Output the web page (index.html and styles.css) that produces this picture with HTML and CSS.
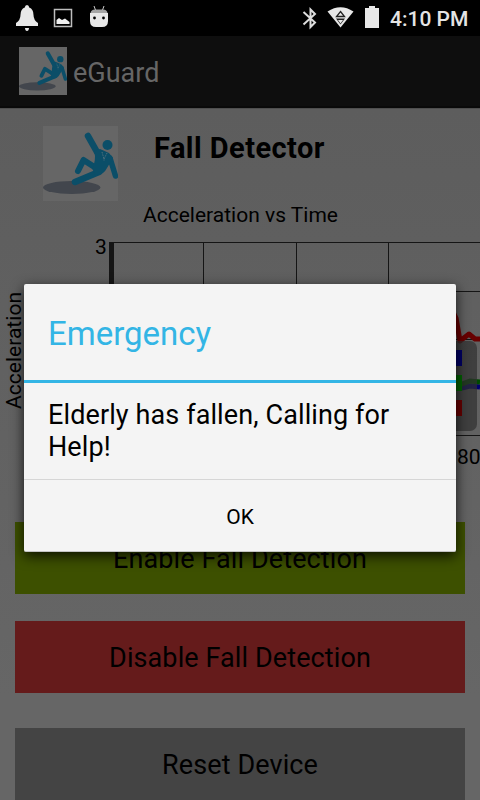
FILE: index.html
```html
<!DOCTYPE html>
<html lang="en">
<head>
<meta charset="utf-8">
<title>eGuard</title>
<link rel="stylesheet" href="styles.css">
</head>
<body>
<svg class="defs" width="0" height="0" aria-hidden="true">
  <symbol id="falling" viewBox="0 0 75 75">
    <rect width="75" height="75" fill="#666"/>
    <ellipse cx="28.700" cy="61.500" rx="28.700" ry="6.500" fill="#42464d"/>
    <circle cx="64.500" cy="19" r="5" fill="#0b4e68"/>
    <g fill="none" stroke="#0b4e68" stroke-linecap="round" stroke-linejoin="round">
      <path d="M45 10L54 26" stroke-width="6.500"/>
      <path d="M67 32L72.500 50" stroke-width="5.500"/>
      <path d="M53 42L40.500 34L35 45" stroke-width="6"/>
      <path d="M32 56L56 46" stroke-width="6.500"/>
    </g>
    <path d="M51 25L57 23L66 27L70 32L64 42Q60 50 52 49L49 42Q52 38 52 30Z" fill="#0b4e68"/>
    <path d="M59 26L61 33L64 27M61 32V35" fill="none" stroke="#4d6f7c" stroke-width="1" stroke-dasharray="1.500 1"/>
  </symbol>
</svg>
<div class="screen">
  <header class="status">
    <svg class="status-icons" width="120" height="36" viewBox="0 0 120 36">
      <path d="M27 5Q29 5 29.200 7.500Q33.500 9 33.500 15Q33.500 20 38 23V26H16V23Q20.500 20 20.500 15Q20.500 9 24.800 7.500Q25 5 27 5ZM25 28H29Q28.800 31 27 31Q25.200 31 25 28Z" fill="#e8e8e8"/>
      <rect x="54.500" y="9.500" width="17" height="17" fill="none" stroke="#bdbdbd" stroke-width="1.500"/>
      <path d="M56.500 24V20L59 18L62 20L65 18.500L69.500 22V24Z" fill="#f0f0f0"/>
      <path d="M94 6L95.500 10M104 6L102.500 10" stroke="#ccc"/>
      <path d="M90 13H108V21Q108 27 102 27H96Q90 27 90 21Z" fill="#e8e8e8"/>
      <path d="M90.500 13Q91 9.500 95 9.500H103Q107 9.500 107.500 13Z" fill="#a5a5a5"/>
      <circle cx="94.500" cy="18" r="1.400"/><circle cx="103.500" cy="18" r="1.400"/>
    </svg>
    <div class="status-right">
      <svg width="80" height="36" viewBox="300 0 80 36">
        <path d="M303.500 12L315 22.500L310.500 27V9.500L315 14L303.500 24.500" fill="none" stroke="#ddd" stroke-width="2"/>
        <path d="M327.500 11.500Q340.500 3 353.500 11.500L340.500 27.500Z" fill="#e8e8e8"/>
        <path d="M340.500 11.500L344.500 16.500H336.500Z" fill="#e8e8e8" stroke="#222" stroke-width="1.300"/>
        <path d="M336 18.500H345L340.500 24.500Z" fill="#222"/>
        <path d="M338 20H343L340.500 23.500Z" fill="#e8e8e8"/>
        <path d="M365 8H369V6H375V8H379V28H365Z" fill="#e8e8e8"/>
      </svg>
      <span class="clock">4:10 PM</span>
    </div>
  </header>
  <div class="appbar">
    <svg class="app-icon" width="48" height="48"><use href="#falling"/></svg>
    <span class="app-name">eGuard</span>
  </div>
  <main class="content">
    <div class="heading">
      <svg width="75" height="75"><use href="#falling"/></svg>
      <h1>Fall Detector</h1>
    </div>
    <svg class="chart" width="480" height="321" viewBox="0 201 480 321">
      <text x="143" y="222" textLength="195">Acceleration vs Time</text>
      <text x="95" y="254">3</text>
      <text transform="translate(21 409) rotate(-90)" textLength="117">Acceleration</text>
      <path d="M112 242.500H480M203.500 242V435M296.500 242V435M388.500 242V435M112 291.500H480M112 339.500H480M112 387.500H480M112 435.500H480" fill="none" stroke="#151515"/>
      <rect x="109" y="242" width="5" height="194" fill="#151515"/>
      <path d="M450 388L462 388L470 386L480 387" fill="none" stroke="#00006e" stroke-width="5"/>
      <path d="M450 382L462 384L470 381L480 382" fill="none" stroke="#004a00" stroke-width="5"/>
      <path d="M452 310L456 318L460 341L469 334L475 339L480 339" fill="none" stroke="#680000" stroke-width="5" stroke-linejoin="round"/>
      <rect x="400" y="341" width="77" height="90" rx="7" fill="#303030" fill-opacity=".7"/>
      <rect x="446" y="350" width="16" height="16" fill="#000065"/>
      <rect x="446" y="375" width="16" height="16" fill="#006000"/>
      <rect x="446" y="400" width="16" height="16" fill="#680000"/>
      <text x="457" y="464">80</text>
    </svg>
    <div class="buttons">
      <button class="btn enable">Enable Fall Detection</button>
      <button class="btn disable">Disable Fall Detection</button>
      <button class="btn reset">Reset Device</button>
    </div>
  </main>
  <section class="dialog" role="dialog">
    <h2>Emergency</h2>
    <p>Elderly has fallen, Calling for Help!</p>
    <button class="ok">OK</button>
  </section>
</div>
</body>
</html>
```

FILE: styles.css
```css
* { box-sizing: border-box; }
body { margin: 0; font-family: Roboto, sans-serif; color: #000; }
button { border: 0; padding: 0; font-family: inherit; color: #000; }
.defs { position: absolute; }
.screen { position: relative; width: 480px; height: 800px; overflow: hidden; background: #666; }
.status { display: flex; justify-content: space-between; height: 36px; background: #000; }
.status svg { display: block; }
.status-right { display: flex; align-items: center; }
.clock { width: 100px; padding: 2px 0 0 10px; color: #e4e4e4; font-size: 21px; font-weight: 500; line-height: 36px; white-space: nowrap; }
.appbar { display: flex; align-items: center; gap: 6px; height: 72px; padding-left: 19px; background: #0e0e0e; border-bottom: 2px solid #090909; }
.app-name { padding-top: 3px; color: #666; font-size: 27px; }
.content { height: 692px; border-top: 1px solid #4e4e4e; background: linear-gradient(#5d5d5d, #666 85%); }
.heading { display: flex; gap: 36px; height: 92px; padding: 17px 0 0 43px; }
h1 { margin: 4px 0 0; font-size: 29px; line-height: 36px; font-weight: 700; letter-spacing: .45px; }
.chart { display: block; }
.chart text { font-size: 21px; }
.buttons { display: flex; flex-direction: column; padding: 0 15px; }
.btn { height: 72px; flex: none; padding-top: 2px; font-size: 27px; letter-spacing: .1px; }
.enable { background: #3d5000; }
.disable { margin-top: 27px; background: #651b1b; }
.reset { margin-top: 35px; background: #444; }
.dialog { position: absolute; left: 24px; top: 284px; width: 432px; height: 268px; background: #f4f4f4; border-radius: 2px; border-bottom: 1px solid #c4c4c4; box-shadow: 0 4px 13px rgba(0, 0, 0, .8); }
.dialog h2 { height: 99px; margin: 0; padding-left: 24px; border-bottom: 3px solid #33b5e5; color: #33b5e5; font-size: 33px; font-weight: 400; line-height: 99px; }
.dialog p { height: 96px; margin: 0; padding: 16px 24px; font-size: 27px; line-height: 32px; letter-spacing: .11px; }
.ok { display: block; width: 100%; height: 72px; padding-top: 2px; border-top: 1px solid #d6d6d6; background: transparent; font-size: 21px; }
```
